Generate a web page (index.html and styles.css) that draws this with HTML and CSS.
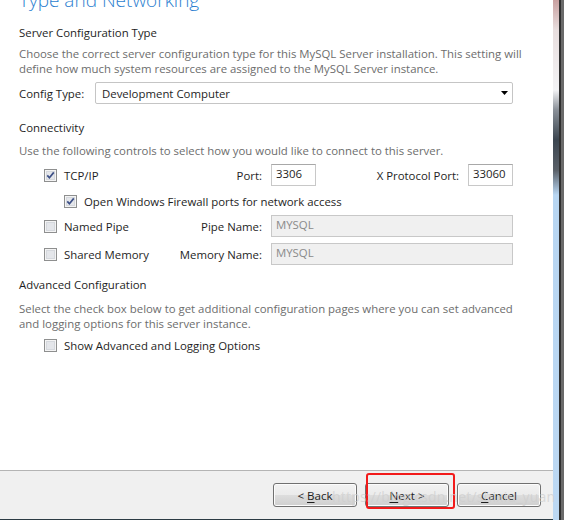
FILE: index.html
```html
<!DOCTYPE html>
<html lang="en">
<head>
<meta charset="utf-8">
<title>Type and Networking</title>
<link rel="stylesheet" href="styles.css">
</head>
<body>
<div class="window">
  <div class="pane">
    <div class="main">
      <h1 class="title">Type and Networking</h1>

      <h2 class="section first">Server Configuration Type</h2>
      <p class="desc top">Choose the correct server configuration type for this MySQL Server installation. This setting will<br>define how much system resources are assigned to the MySQL Server instance.</p>
      <div class="config-row">
        <span class="config-label">Config Type:</span>
        <div class="select">
          <span>Development Computer</span>
          <svg class="arrow" width="7" height="4" viewBox="0 0 7 4"><polygon points="0,0 7,0 3.5,4" fill="#000"/></svg>
        </div>
      </div>

      <h2 class="section conn">Connectivity</h2>
      <p class="desc one">Use the following controls to select how you would like to connect to this server.</p>

      <div class="row tcp">
        <div class="left">
          <svg class="chk" width="13" height="13" viewBox="0 0 13 13"><rect x="0.5" y="0.5" width="12" height="12" fill="#f4f4f4" stroke="#8e8f8f"/><rect x="2.5" y="2.5" width="8" height="8" fill="#e4e6ea" stroke="#d5d8dd"/><path d="M3.3 6.4 L5.4 8.8 L9.8 3.4" fill="none" stroke="#3c4f86" stroke-width="1.7"/></svg>
          <span class="name">TCP/IP</span>
          <span class="field">Port:</span>
        </div>
        <div class="input small">3306</div>
        <span class="field xport">X Protocol Port:</span>
        <div class="input small">33060</div>
      </div>

      <div class="row sub">
        <svg class="chk" width="13" height="13" viewBox="0 0 13 13"><rect x="0.5" y="0.5" width="12" height="12" fill="#f4f4f4" stroke="#8e8f8f"/><rect x="2.5" y="2.5" width="8" height="8" fill="#e4e6ea" stroke="#d5d8dd"/><path d="M3.3 6.4 L5.4 8.8 L9.8 3.4" fill="none" stroke="#3c4f86" stroke-width="1.7"/></svg>
        <span class="name">Open Windows Firewall ports for network access</span>
      </div>

      <div class="row pipe">
        <div class="left">
          <svg class="chk" width="13" height="13" viewBox="0 0 13 13"><rect x="0.5" y="0.5" width="12" height="12" fill="#f4f4f4" stroke="#8e8f8f"/><rect x="2.5" y="2.5" width="8" height="8" fill="#e4e6ea" stroke="#d5d8dd"/></svg>
          <span class="name">Named Pipe</span>
          <span class="field">Pipe Name:</span>
        </div>
        <div class="input wide disabled">MYSQL</div>
      </div>

      <div class="row mem">
        <div class="left">
          <svg class="chk" width="13" height="13" viewBox="0 0 13 13"><rect x="0.5" y="0.5" width="12" height="12" fill="#f4f4f4" stroke="#8e8f8f"/><rect x="2.5" y="2.5" width="8" height="8" fill="#e4e6ea" stroke="#d5d8dd"/></svg>
          <span class="name">Shared Memory</span>
          <span class="field">Memory Name:</span>
        </div>
        <div class="input wide disabled">MYSQL</div>
      </div>

      <h2 class="section adv">Advanced Configuration</h2>
      <p class="desc adv-desc">Select the check box below to get additional configuration pages where you can set advanced<br>and logging options for this server instance.</p>

      <div class="row show">
        <svg class="chk" width="13" height="13" viewBox="0 0 13 13"><rect x="0.5" y="0.5" width="12" height="12" fill="#f4f4f4" stroke="#8e8f8f"/><rect x="2.5" y="2.5" width="8" height="8" fill="#e4e6ea" stroke="#d5d8dd"/></svg>
        <span class="name">Show Advanced and Logging Options</span>
      </div>
    </div>

    <div class="footer">
      <button class="btn">&lt; <u>B</u>ack</button>
      <button class="btn"><u>N</u>ext &gt;</button>
      <button class="btn"><u>C</u>ancel</button>
    </div>
  </div>
  <div class="frame"></div>

  <div class="highlight"></div>
  <div class="watermark">https://blog.csdn.net/shixiu_yuan</div>
</div>
</body>
</html>
```

FILE: styles.css
```css
* { box-sizing: border-box; }

html, body {
  margin: 0;
  padding: 0;
  width: 564px;
  height: 520px;
  overflow: hidden;
  background: #2a3a44;
}

body {
  font-family: "Open Sans", "Noto Sans", "Liberation Sans", sans-serif;
  font-size: 11.4px;
  color: #1e1e1e;
}

.window {
  position: relative;
  display: flex;
  width: 564px;
  height: 520px;
}

.pane {
  width: 553px;
  display: flex;
  flex-direction: column;
}

.main {
  flex: 1;
  background: #ffffff;
  padding: 0 40px 0 19px;
  overflow: hidden;
}

.title {
  margin: -11px 0 0 0;
  font-size: 19px;
  line-height: 22px;
  font-weight: 300;
  color: #2d7fd0;
  white-space: nowrap;
}

.section {
  margin: 0;
  font-size: 11.4px;
  line-height: 15px;
  font-weight: normal;
  color: #1e1e1e;
}
.section.first { margin-top: 14px; }
.section.conn { margin-top: 16px; }
.section.adv { margin-top: 12px; }

.desc {
  margin: 7px 0 0 0;
  line-height: 15px;
  color: #6d6d6d;
  white-space: nowrap;
}
.desc.top { margin-top: 6px; }
.desc.one { margin-top: 8px; }
.desc.adv-desc { margin-top: 9px; }

.config-row {
  display: flex;
  align-items: center;
  height: 22px;
  margin-top: 6px;
}
.config-label { width: 76px; }
.select {
  flex: 1;
  height: 22px;
  border: 1px solid #c5c5c5;
  border-radius: 2px;
  background: #fff;
  display: flex;
  align-items: center;
  justify-content: space-between;
  padding: 0 4px 0 6px;
}
.arrow { display: block; }

.row {
  display: flex;
  align-items: center;
  height: 22px;
  padding-left: 25px;
}
.row.tcp { margin-top: 6px; }
.row.sub { height: 15px; margin-top: 8px; padding-left: 45px; }
.row.pipe { margin-top: 6px; }
.row.mem { margin-top: 6px; }
.row.show { height: 15px; margin-top: 7px; }

.left {
  width: 218px;
  display: flex;
  align-items: center;
}
.chk { display: block; flex: none; }
.name { margin-left: 7px; white-space: nowrap; }
.field { margin-left: auto; white-space: nowrap; }
.xport { flex: 1; text-align: right; margin-right: 9px; }

.input {
  height: 22px;
  margin-left: 9px;
  border: 1px solid #c8c8c8;
  border-top-color: #a8a8a8;
  background: #fff;
  padding: 0 4px;
  line-height: 18px;
}
.input.small { width: 45px; }
.xport + .input { margin-left: 0; }
.input.wide { flex: 1; }
.input.disabled {
  background: #f0f0f0;
  border-color: #c8c8c8;
  color: #8a8a8a;
}

.footer {
  height: 50px;
  background: #f0f0f0;
  border-top: 1px solid #b4b4b4;
  border-bottom: 1px solid #2b3b44;
  display: flex;
  justify-content: flex-end;
  gap: 8px;
  padding: 12px 12px 0 0;
}

.btn {
  width: 84px;
  height: 24px;
  border: 1px solid #707070;
  border-radius: 3px;
  background: linear-gradient(#f2f2f2 0%, #ebebeb 50%, #dddddd 51%, #cfcfcf 100%);
  box-shadow: inset 0 0 0 1px #fcfcfc;
  font-family: inherit;
  font-size: 11.6px;
  color: #1e1e1e;
  padding: 0;
}
.btn u { text-decoration: underline; text-underline-offset: 2px; }

.frame {
  width: 11px;
  background:
    linear-gradient(90deg, transparent 0, transparent 6px, #303030 6px, #303030 8px, #6a6a6a 8px, #6a6a6a 11px),
    linear-gradient(#c9a0a0 0, #e8dede 30px, #f3f3f5 90px, #8a9098 110px, #3c4650 140px, #5a6068 170px, #b8d6f2 195px, #bcd8f3 520px);
}

.highlight {
  position: absolute;
  left: 366px;
  top: 473px;
  width: 89px;
  height: 36px;
  border: 2px solid #f21a1a;
  border-radius: 3px;
}

.watermark {
  position: absolute;
  left: 332px;
  top: 487px;
  font-size: 14px;
  color: rgba(205, 205, 205, 0.7);
  white-space: nowrap;
  letter-spacing: 0.2px;
}
```
